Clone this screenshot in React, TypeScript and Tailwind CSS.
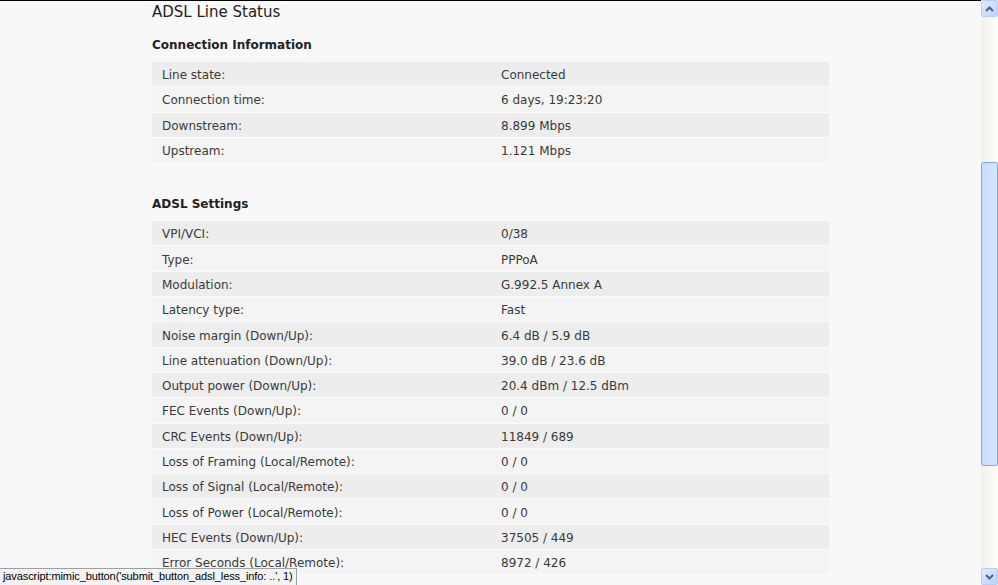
import React from "react"

type Row = [string, string]

const connection: Row[] = [
  ["Line state:", "Connected"],
  ["Connection time:", "6 days, 19:23:20"],
  ["Downstream:", "8.899 Mbps"],
  ["Upstream:", "1.121 Mbps"],
]

const settings: Row[] = [
  ["VPI/VCI:", "0/38"],
  ["Type:", "PPPoA"],
  ["Modulation:", "G.992.5 Annex A"],
  ["Latency type:", "Fast"],
  ["Noise margin (Down/Up):", "6.4 dB / 5.9 dB"],
  ["Line attenuation (Down/Up):", "39.0 dB / 23.6 dB"],
  ["Output power (Down/Up):", "20.4 dBm / 12.5 dBm"],
  ["FEC Events (Down/Up):", "0 / 0"],
  ["CRC Events (Down/Up):", "11849 / 689"],
  ["Loss of Framing (Local/Remote):", "0 / 0"],
  ["Loss of Signal (Local/Remote):", "0 / 0"],
  ["Loss of Power (Local/Remote):", "0 / 0"],
  ["HEC Events (Down/Up):", "37505 / 449"],
  ["Error Seconds (Local/Remote):", "8972 / 426"],
]

function StatusTable({ rows }: { rows: Row[] }) {
  return (
    <div className="w-[677px]">
      {rows.map(([label, value], i) => (
        <div
          key={label}
          className={`grid grid-cols-[339px_1fr] h-[25.3px] items-center border-b border-[#fbfbfb] pt-[2px] ${
            i % 2 === 0 ? "bg-[#ededed]" : "bg-[#f4f4f4]"
          }`}
        >
          <span className="pl-[10px]">{label}</span>
          <span className="pl-[10px]">{value}</span>
        </div>
      ))}
    </div>
  )
}

function ScrollButton({ down }: { down?: boolean }) {
  return (
    <div className="h-[17px] w-[17px] rounded-[2px] border border-[#b9cdf7] bg-gradient-to-br from-[#e3ecfd] to-[#bcd0f8] flex items-center justify-center">
      <svg width="9" height="6" viewBox="0 0 9 6" className={down ? "rotate-180" : ""}>
        <path d="M1 5 L4.5 1.5 L8 5" stroke="#4d6185" strokeWidth="2" fill="none" />
      </svg>
    </div>
  )
}

export default function App() {
  return (
    <div className="relative flex h-[585px] w-[998px] overflow-hidden bg-[#f8f8f8] font-['DejaVu_Sans',Verdana,sans-serif] text-[12px] text-[#3a3a3a]">
      <div className="flex-1 border-t border-black pl-[152px]">
        <h1 className="mt-[2px] h-[19px] text-[15px] leading-[19px] text-[#222]">ADSL Line Status</h1>
        <h2 className="mt-[15px] h-[17px] text-[12px] font-bold leading-[17px] text-[#222]">Connection Information</h2>
        <div className="mt-[8px]">
          <StatusTable rows={connection} />
        </div>
        <h2 className="mt-[33px] h-[17px] text-[12px] font-bold leading-[17px] text-[#222]">ADSL Settings</h2>
        <div className="mt-[8px]">
          <StatusTable rows={settings} />
        </div>
      </div>

      {/* scrollbar */}
      <div className="flex w-[17px] flex-col bg-gradient-to-r from-[#f3f1ec] to-[#fdfdfa]">
        <ScrollButton />
        <div className="flex-1">
          <div className="mt-[145px] h-[304px] rounded-[2px] border border-[#86a5ea] bg-gradient-to-r from-[#c9dafc] to-[#d9e5fd]" />
        </div>
        <ScrollButton down />
      </div>

      <div className="absolute bottom-0 left-0 h-[17px] w-[297px] whitespace-nowrap border-t border-r border-[#a0a0a0] bg-[#f3f3f3] pl-[3px] font-['Liberation_Sans',Tahoma,sans-serif] text-[11px] leading-[15px] tracking-[-0.1px] text-black">
        javascript:mimic_button('submit_button_adsl_less_info: ..', 1)
      </div>
    </div>
  )
}
